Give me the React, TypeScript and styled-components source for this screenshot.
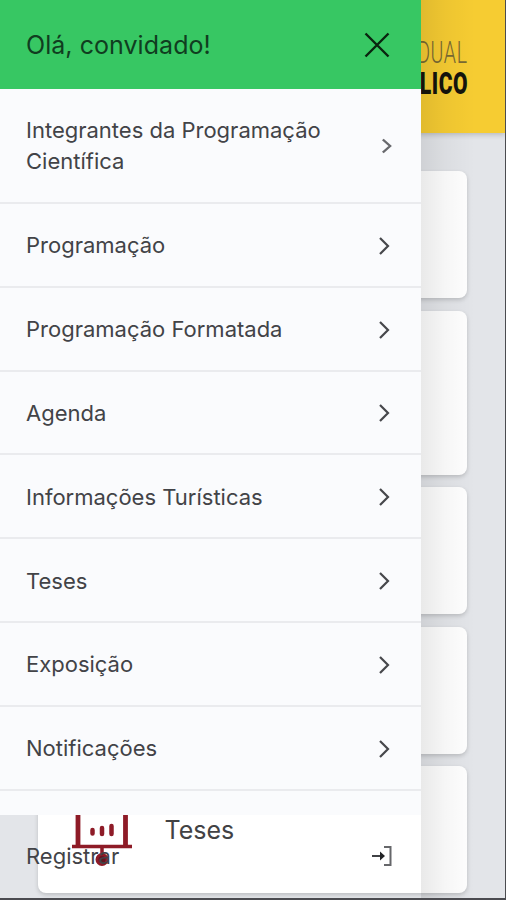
import React from "react";
import styled, { createGlobalStyle } from "styled-components";

const GlobalStyle = createGlobalStyle`
  * { box-sizing: border-box; }
  body { margin: 0; font-family: Inter, "Liberation Sans", sans-serif; }
`;

const Screen = styled.div`
  position: relative;
  width: 506px;
  height: 900px;
  overflow: hidden;
  background: #e3e5e9;
  border-right: 1px solid #4b4c50;
  border-bottom: 2px solid #4b4b50;
`;

const Page = styled.main`
  display: flex;
  flex-direction: column;
`;

const Banner = styled.header`
  height: 133px;
  padding: 37px 37px 0 0;
  background: #f6cc32;
  box-shadow: 0 2px 5px rgba(0, 0, 0, 0.18);
  display: flex;
  flex-direction: column;
  align-items: flex-end;
`;

const BannerLine = styled.span<{ $bold?: boolean }>`
  font-family: Roboto, sans-serif;
  font-size: ${(p) => (p.$bold ? 31 : 32)}px;
  line-height: 31px;
  font-weight: ${(p) => (p.$bold ? 900 : 300)};
  letter-spacing: ${(p) => (p.$bold ? 0.8 : 1)}px;
  color: ${(p) => (p.$bold ? "#15140c" : "#796a32")};
  transform: scaleX(${(p) => (p.$bold ? 0.68 : 0.61)});
  transform-origin: right;
  white-space: nowrap;
`;

const Cards = styled.section`
  display: flex;
  flex-direction: column;
  gap: 12.5px;
  padding: 38px 38px 0;
`;

const Card = styled.article<{ $height: number }>`
  height: ${(p) => p.$height}px;
  display: flex;
  align-items: center;
  padding-left: 33.5px;
  background: #fff;
  border-radius: 8px;
  box-shadow: 0 2px 4px rgba(0, 0, 0, 0.17);
`;

const CardLabel = styled.span`
  margin-left: 33px;
  font-size: 25px;
  line-height: 32px;
  color: #424244;
`;

const Drawer = styled.aside`
  position: absolute;
  inset: 0 auto 0 0;
  width: 421px;
  height: 900px;
  display: flex;
  flex-direction: column;
`;

const DrawerShade = styled.div`
  position: absolute;
  top: 0;
  bottom: 0;
  left: 421px;
  width: 54px;
  background: linear-gradient(90deg, rgba(0, 0, 0, 0.085), rgba(0, 0, 0, 0.035) 45%, transparent);
`;

const DrawerHeader = styled.header`
  height: 88.5px;
  flex: none;
  display: flex;
  align-items: center;
  justify-content: space-between;
  padding: 2px 31px 0 26px;
  background: #37c763;
  color: #103d20;
`;

const Greeting = styled.span`
  font-size: 25px;
  letter-spacing: 0.05px;
`;

const Menu = styled.nav`
  height: 726.5px;
  overflow: hidden;
  background: #fafbfd;
`;

const MenuRow = styled.a<{ $tall?: boolean }>`
  height: ${(p) => (p.$tall ? 115.5 : 83.8)}px;
  display: flex;
  align-items: center;
  justify-content: space-between;
  padding: ${(p) => (p.$tall ? "1px 29px 0 26px" : "2px 31px 0 26px")};
  border-bottom: 2px solid #eaebee;
  color: #424347;
`;

const MenuLabel = styled.span`
  max-width: 310px;
  font-size: 22px;
  line-height: 31px;
`;

const Footer = styled.footer`
  flex: 1;
  display: flex;
  align-items: center;
  justify-content: space-between;
  padding: 0 28px 3px 26px;
  color: #424347;
`;

const Chevron = ({ small }: { small?: boolean }) => (
  <svg width={small ? 11 : 12} height={small ? 16 : 20} viewBox="0 0 12 20" fill="none" preserveAspectRatio="none">
    <path d="M2 2l8 8-8 8" stroke={small ? "#68696d" : "#46474b"} strokeWidth={small ? 2.6 : 2.2} />
  </svg>
);

const CloseIcon = () => (
  <svg width="26" height="26" viewBox="0 0 26 26" fill="none">
    <path d="M1.5 1.5l23 23M24.5 1.5l-23 23" stroke="#09240f" strokeWidth="2.4" />
  </svg>
);

const EnterIcon = () => (
  <svg width="22" height="22" viewBox="0 0 22 22" fill="none">
    <path d="M13 2h6.5v18H13" stroke="#66676a" strokeWidth="2" />
    <path d="M1 11h10" stroke="#404145" strokeWidth="2" />
    <path d="M9 6.500l5 4.500-5 4.500z" fill="#222326" />
  </svg>
);

const PresentationIcon = () => (
  <svg width="60" height="74" viewBox="0 0 60 74" fill="none" stroke="#8e1b27">
    <path d="M6 8v46M53.500 8v46" strokeWidth="4.800" />
    <path d="M0 8h60M0 53.500h60" strokeWidth="3.500" />
    <path d="M20.500 37v3.500M30 35v6M39.500 33v8" strokeWidth="4.500" strokeLinecap="round" />
    <path d="M30 54v8" strokeWidth="3.500" />
    <circle cx="30" cy="66.500" r="5" fill="#651522" strokeWidth="3" />
  </svg>
);

const items = [
  "Integrantes da Programação Científica",
  "Programação",
  "Programação Formatada",
  "Agenda",
  "Informações Turísticas",
  "Teses",
  "Exposição",
  "Notificações",
];

export default function App() {
  return (
    <>
      <GlobalStyle />
      <Screen>
        <Page>
          <Banner>
            <BannerLine>DUAL</BannerLine>
            <BannerLine $bold>LICO</BannerLine>
          </Banner>
          <Cards>
            <Card $height={127} />
            <Card $height={164} />
            <Card $height={127} />
            <Card $height={127} />
            <Card $height={127}>
              <PresentationIcon />
              <CardLabel>Teses</CardLabel>
            </Card>
          </Cards>
        </Page>
        <DrawerShade />
        <Drawer>
          <DrawerHeader>
            <Greeting>Olá, convidado!</Greeting>
            <CloseIcon />
          </DrawerHeader>
          <Menu>
            {items.map((item, i) => (
              <MenuRow key={item} $tall={i === 0}>
                <MenuLabel>{item}</MenuLabel>
                <Chevron small={i === 0} />
              </MenuRow>
            ))}
          </Menu>
          <Footer>
            <MenuLabel>Registrar</MenuLabel>
            <EnterIcon />
          </Footer>
        </Drawer>
      </Screen>
    </>
  );
}
